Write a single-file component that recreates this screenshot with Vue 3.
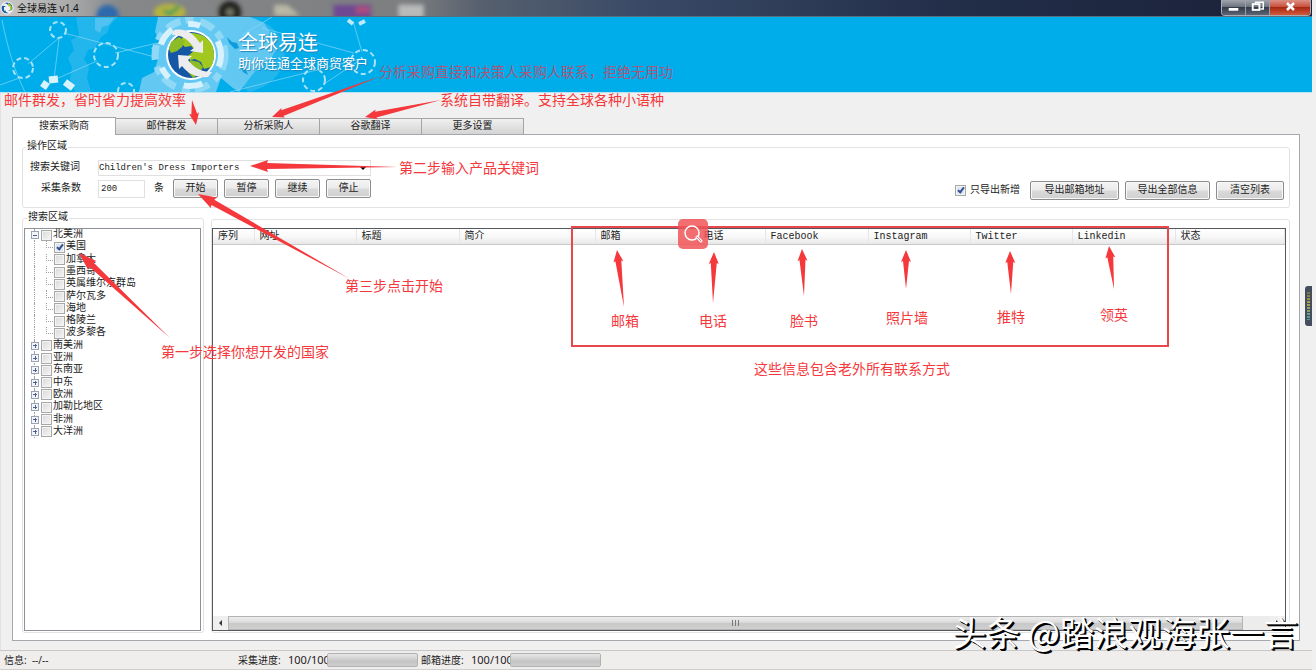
<template>
  <div class="app-window">
    <header class="title-bar">
      <svg class="desktop-blur" width="520" height="17" viewBox="0 0 520 17" aria-hidden="true">
        <defs>
          <filter id="soft" x="-20%" y="-50%" width="140%" height="200%"><feGaussianBlur stdDeviation="2" /></filter>
        </defs>
        <g filter="url(#soft)">
          <circle cx="98" cy="17" r="12" fill="#2f69ab" />
          <ellipse cx="164" cy="13" rx="17" ry="9" fill="#b5b43c" />
          <path d="M158 11l6 4 10-8" stroke="#3f9a5a" stroke-width="4" fill="none" />
          <circle cx="228" cy="13" r="12" fill="#22241f" />
          <circle cx="228" cy="13" r="4" fill="#77786a" />
          <path d="M275 17V5h14l14 12z" fill="#b9b8a4" />
          <rect x="338" y="5" width="40" height="16" fill="#704a92" />
          <rect x="362" y="7" width="14" height="7" fill="#b04d7c" />
          <rect x="407" y="5" width="27" height="14" fill="#b9bbbb" />
        </g>
      </svg>
      <svg class="title-icon" viewBox="0 0 14 14" aria-hidden="true">
        <circle cx="7" cy="7" r="6" fill="#1c5fa8" stroke="#fff" />
        <path d="M8 2c3 1 5 4 3 8L8 7z" fill="#a5c92c" />
        <path d="M2 3c3-2 6 0 7 3l1-1v4H6l1-1C6 5 4 4 2 5zM12 11c-3 2-6 1-7-2L4 10V6h4L7 7c1 3 3 3 5 2z" fill="#f2f2f2" />
      </svg>
      <span class="title-text">全球易连 v1.4</span>
      <div class="window-buttons">
        <button type="button" aria-label="最小化"><svg viewBox="0 0 24 15"><path d="M7 8h10v3H7z" fill="#fff" /></svg></button>
        <button type="button" aria-label="还原"><svg viewBox="0 0 24 15"><path d="M10 5V2h8v7h-3" stroke="#fff" stroke-width="1.5" fill="none" /><rect x="7" y="4" width="7" height="6" stroke="#fff" stroke-width="2" fill="none" /></svg></button>
        <button type="button" class="close" aria-label="关闭"><svg viewBox="0 0 40 15"><path d="M17 3l7 7M24 3l-7 7" stroke="#fff" stroke-width="2.5" /></svg></button>
      </div>
    </header>

    <div class="banner">
      <svg class="banner-art" width="400" height="75" viewBox="0 0 400 75" aria-hidden="true">
        <g fill="#63c8f2">
          <path d="M76 0h42l-8 8-3 8-6 4-6 11-7 2-4 9 5 8-2 11 4 14H75l-5-13 2-12-4-9 6-8-3-10 8-4z" opacity=".35" />
          <path d="M95 1h19l-5 7-7 2-2 6-5-3z" opacity=".7" />
          <path d="M158 0h92l14 6 6 9-4 9 10 9-6 10-9 5-9 10-6 8-7 9-6-4-12-10-5 14h-77l3-14 12-6 4-13-7-11 9-7-5-9z" />
          <path d="M250 0c22 5 38 22 34 44-4 16-18 27-35 31l-29-25z" opacity=".35" />
        </g>
        <path d="M227 20l5 5 5 1 2 5-4 1-6-6zM238 44l7 6 3 8-5-3z" fill="#0f9cdc" />
        <g stroke="#86d6f5" fill="none" stroke-width="1" opacity=".7">
          <path d="M2 3C8 33 15 55 25 75M60 20L28 47M64 16l91 24M59 22l-5 40M115 36l42-10M22 60L0 68M97 44L56 62M242 18L272 0M262 11l92 25M362 35l-9-31M357 45l-33 22M230 75L360 42" />
        </g>
        <g fill="none" stroke="#a9e3fa" stroke-dasharray="5 3" stroke-width="2">
          <circle cx="58" cy="13" r="8" />
          <circle cx="106" cy="38" r="12" />
          <circle cx="23" cy="51" r="10" />
          <circle cx="126" cy="74" r="8" />
          <circle cx="314" cy="63" r="11" />
          <circle cx="363" cy="45" r="12" />
        </g>
        <g fill="none" stroke="#bdeafb">
          <path d="M348 3l5 4M359 7l6-3" stroke-width="4" />
          <path d="M43 71l4-6M49 63l9-1M65 65l8 6" stroke-width="7" stroke="#d8f3fd" />
        </g>
        <circle cx="190" cy="38" r="35" fill="none" stroke="#90d9f6" stroke-width="7" stroke-dasharray="15 5 8 7" />
        <circle cx="190" cy="38" r="31" fill="none" stroke="#d7f2fd" stroke-width="6" stroke-dasharray="12 24 19 17" />
        <circle cx="191" cy="38" r="25" fill="#fff" />
        <circle cx="191" cy="38" r="23" fill="#1557a5" />
        <path d="M183 17c11-3 22 0 28 9 4 7 4 16 0 24l-7 2-3-7-6-3-5 1-2-4 7-6-4-4-6 1-5-5 3-5z" fill="#a0c81f" />
        <path d="M190 43l9 2 4 5-4 7-6 4-5-6z" fill="#8dbd26" />
        <path d="M171 25l8-5 6 4-3 6-5 4-6 2-2-4z" fill="#8dbd26" />
        <path d="M172 18l2-5c12-2 19 3 26 13l3-3v13l-13-2 4-3c-6-9-12-13-22-13z" fill="#ececee" />
        <path d="M212 55l-4 5c-11 1-20-3-26-11l-3 3-1-14 14 1-4 4c6 8 13 12 24 12z" fill="#ececee" />
      </svg>
      <div class="brand">
        <h1>全球易连</h1>
        <p>助你连通全球商贸客户</p>
      </div>
    </div>

    <main class="workspace">
      <nav class="tabs">
        <button
          v-for="tab in tabs"
          :key="tab"
          type="button"
          :class="{ active: tab === activeTab }"
          @click="activeTab = tab"
        >{{ tab }}</button>
      </nav>

      <div class="panel">
        <fieldset class="group operation">
          <legend>操作区域</legend>
          <div class="operation-body">
            <div class="search-form">
              <div class="form-row">
                <label for="keyword">搜索关键词</label>
                <select id="keyword" v-model="keyword">
                  <option>Children's Dress Importers</option>
                </select>
              </div>
              <div class="form-row second">
                <label for="count">采集条数</label>
                <input id="count" v-model="count" type="text">
                <span class="unit">条</span>
                <div class="run-buttons">
                  <button v-for="name in runButtons" :key="name" type="button" class="btn">{{ name }}</button>
                </div>
              </div>
            </div>
            <div class="export-bar">
              <label class="only-new"><input v-model="onlyNew" type="checkbox" class="check">只导出新增</label>
              <button type="button" class="btn wide">导出邮箱地址</button>
              <button type="button" class="btn medium">导出全部信息</button>
              <button type="button" class="btn small">清空列表</button>
            </div>
          </div>
        </fieldset>

        <div class="columns">
          <fieldset class="group region">
            <legend>搜索区域</legend>
            <div class="tree">
              <ul>
                <li v-for="item in regions" :key="item.name" :class="{ child: item.child }">
                  <button
                    v-if="!item.child"
                    type="button"
                    class="expander"
                    :class="{ open: item.open }"
                    :aria-label="item.name"
                  ></button>
                  <label><input v-model="item.checked" type="checkbox" class="check">{{ item.name }}</label>
                </li>
              </ul>
            </div>
          </fieldset>

          <div class="group result">
            <div class="grid-box">
              <table>
                <colgroup>
                  <col v-for="col in columns" :key="col.name" :class="col.size">
                </colgroup>
                <thead>
                  <tr>
                    <th v-for="col in columns" :key="col.name" scope="col">{{ col.name }}</th>
                  </tr>
                </thead>
              </table>
              <div class="scrollbar">
                <button type="button" class="arrow-btn" aria-label="向左"><svg viewBox="0 0 14 14"><path d="M9 4v6L6 7z" fill="#333" /></svg></button>
                <div class="thumb"><i></i><i></i><i></i></div>
                <button type="button" class="arrow-btn" aria-label="向右"><svg viewBox="0 0 14 14"><path d="M6 4v6l3-3z" fill="#333" /></svg></button>
              </div>
            </div>
          </div>
        </div>
      </div>
    </main>

    <footer class="status-bar">
      <span class="info">信息:&nbsp; --/--</span>
      <label class="caption" for="collect">采集进度:</label>
      <span class="value">100/100</span>
      <progress id="collect" value="0" max="100"></progress>
      <label class="caption" for="mail">邮箱进度:</label>
      <span class="value">100/100</span>
      <progress id="mail" value="0" max="100"></progress>
    </footer>

    <!-- 教程标注 -->
    <svg class="notes" width="1316" height="670" viewBox="0 0 1316 670">
      <rect x="572" y="227" width="596" height="119" fill="none" stroke="#e8474c" stroke-width="2" />
      <polygon v-for="(a, i) in arrows" :key="i" :points="arrowPoints(a)" />
      <text v-for="n in notes" :key="n.text" :x="n.x" :y="n.y" :class="{ dim: n.dim }">{{ n.text }}</text>
    </svg>
    <button type="button" class="lens" aria-label="搜图">
      <svg viewBox="0 0 30 30"><circle cx="14" cy="14" r="7" fill="none" stroke="#fff" stroke-width="1.5" /><path d="M19 18l4 4" stroke="#fff" stroke-width="3" stroke-linecap="round" /><path d="M19 18l4 4" stroke="#ee6b6e" stroke-linecap="round" /></svg>
    </button>
    <div class="side-widget"><i></i></div>
    <div class="watermark">头条 @踏浪观海张一言</div>
  </div>
</template>

<script setup>
import { ref } from 'vue'

const tabs = ['搜索采购商', '邮件群发', '分析采购人', '谷歌翻译', '更多设置']
const activeTab = ref('搜索采购商')

const keyword = ref("Children's Dress Importers")
const count = ref('200')
const onlyNew = ref(true)
const runButtons = ['开始', '暂停', '继续', '停止']

const regions = ref([
  { name: '北美洲', open: true, checked: false },
  { name: '美国', child: true, checked: true },
  { name: '加拿大', child: true, checked: false },
  { name: '墨西哥', child: true, checked: false },
  { name: '英属维尔京群岛', child: true, checked: false },
  { name: '萨尔瓦多', child: true, checked: false },
  { name: '海地', child: true, checked: false },
  { name: '格陵兰', child: true, checked: false },
  { name: '波多黎各', child: true, checked: false },
  { name: '南美洲', checked: false },
  { name: '亚洲', checked: false },
  { name: '东南亚', checked: false },
  { name: '中东', checked: false },
  { name: '欧洲', checked: false },
  { name: '加勒比地区', checked: false },
  { name: '非洲', checked: false },
  { name: '大洋洲', checked: false }
])

const columns = [
  { name: '序列', size: 'c-index' },
  { name: '网址', size: 'c-short' },
  { name: '标题', size: 'c-normal' },
  { name: '简介', size: 'c-intro' },
  { name: '邮箱', size: 'c-normal' },
  { name: '电话', size: 'c-phone' },
  { name: 'Facebook', size: 'c-normal' },
  { name: 'Instagram', size: 'c-short' },
  { name: 'Twitter', size: 'c-short' },
  { name: 'Linkedin', size: 'c-normal' },
  { name: '状态', size: 'c-rest' }
]

// 箭头: [尖端x, 尖端y, 尾部x, 尾部y]
const arrows = [
  [196, 125, 192, 100],
  [272, 117, 381, 76],
  [365, 117, 441, 100],
  [250, 166, 398, 167],
  [198, 194, 350, 279],
  [79, 253, 170, 338],
  [617, 250, 624, 307],
  [714, 252, 713, 303],
  [802, 249, 804, 296],
  [906, 250, 906, 289],
  [1010, 251, 1011, 294],
  [1109, 246, 1114, 289]
]

const notes = [
  { text: '邮件群发，省时省力提高效率', x: 4, y: 105 },
  { text: '分析采购直接和决策人采购人联系，拒绝无用功', x: 379, y: 77, dim: true },
  { text: '系统自带翻译。支持全球各种小语种', x: 440, y: 105 },
  { text: '第二步输入产品关键词', x: 399, y: 173 },
  { text: '第三步点击开始', x: 345, y: 291 },
  { text: '第一步选择你想开发的国家', x: 161, y: 357 },
  { text: '邮箱', x: 611, y: 326 },
  { text: '电话', x: 699, y: 326 },
  { text: '脸书', x: 790, y: 326 },
  { text: '照片墙', x: 886, y: 323 },
  { text: '推特', x: 997, y: 322 },
  { text: '领英', x: 1100, y: 320 },
  { text: '这些信息包含老外所有联系方式', x: 754, y: 374 }
]

const arrowPoints = ([x, y, tx, ty]) => {
  const len = Math.hypot(tx - x, ty - y)
  const ux = (tx - x) / len
  const uy = (ty - y) / len
  const big = len > 120
  const head = big ? 18 : 12
  const wing = big ? 6 : 5
  const at = (d, w) => `${x + ux * d - uy * w},${y + uy * d + ux * w}`
  return [at(0, 0), at(head, wing), at(head - 1, 3), at(len, 0), at(head - 1, -3), at(head, -wing)].join(' ')
}
</script>

<style>
body {
  background: #f0f0f0;
}
</style>

<style scoped>
.app-window {
  position: relative;
  display: flex;
  flex-direction: column;
  box-sizing: border-box;
  min-height: 100vh;
  padding-right: 4px;
  overflow: hidden;
  background: #f0f0f0;
  color: #222;
  font-family: "Liberation Mono", "Noto Sans CJK SC", monospace;
  font-size: 10px;
  line-height: 12px;
}

button,
input,
select {
  box-sizing: border-box;
  margin: 0;
  padding: 0;
  font: inherit;
  color: inherit;
}

/* 标题栏 */
.title-bar {
  position: relative;
  display: flex;
  align-items: center;
  height: 17px;
  box-sizing: border-box;
  border-bottom: 1px solid #54707f;
  background: linear-gradient(90deg, #c9c9c9 0, #aaa 70px, #858789 120px, #7c7e80 410px, #56606e 480px, #3a4a66 640px, #222d48 960px, #1a2238 100%);
}

.desktop-blur {
  position: absolute;
  left: 0;
  top: 0;
  height: 16px;
}

.title-icon {
  position: relative;
  width: 14px;
  height: 14px;
}

.title-text {
  position: relative;
  margin-left: 3px;
  color: #111;
  font-family: "Noto Sans", "Noto Sans CJK SC", sans-serif;
}

.window-buttons {
  display: flex;
  align-self: flex-start;
  height: 15px;
  margin-left: auto;
  margin-right: 1px;
  border: 1px solid #a9aeb6;
  border-top: none;
  border-radius: 0 0 4px 4px;
  overflow: hidden;
}

.window-buttons button {
  width: 24px;
  border: none;
  border-right: 1px solid #9aa0aa;
  background: linear-gradient(#a0a5ad 0, #6e7480 45%, #343b49 50%, #5c6675 100%);
}

.window-buttons .close {
  width: 40px;
  border-right: none;
  background: linear-gradient(#dc9186 0, #c8503e 45%, #a92812 50%, #d05a3c 100%);
}

.window-buttons svg {
  display: block;
  width: 100%;
  height: 15px;
}

/* 横幅 */
.banner {
  position: relative;
  height: 76px;
  background: #00adeb;
  border-bottom: 1px solid #b9e2f3;
  box-sizing: border-box;
}

.banner-art {
  position: absolute;
  left: 0;
  top: 0;
  height: 75px;
}

.brand {
  position: relative;
  padding: 13px 0 0 238px;
  color: #fff;
  font-family: "Noto Sans CJK SC", sans-serif;
  text-shadow: 1px 1px 1px #2183b5;
}

.brand h1 {
  margin: 0;
  font-size: 20px;
  line-height: 24px;
  font-weight: 400;
}

.brand p {
  margin: 0;
  font-size: 13px;
  line-height: 18px;
}

/* 主体 */
.workspace {
  display: flex;
  flex: 1;
  flex-direction: column;
  padding: 24px 12px 9px 11px;
  border-left: 1px solid #e2e2e2;
}

.tabs {
  display: flex;
  align-items: flex-end;
}

.tabs button {
  width: 102px;
  height: 16px;
  border: 1px solid #a5a5a5;
  border-left: none;
  border-bottom: none;
  background: linear-gradient(#f0f0f0, #d4d4d4);
}

.tabs button.active {
  position: relative;
  width: 104px;
  height: 18px;
  margin-bottom: -1px;
  border-left: 1px solid #a5a5a5;
  background: #fff;
}

.panel {
  display: flex;
  flex: 1;
  flex-direction: column;
  padding: 6px 9px 7px;
  border: 1px solid #a5a9ad;
  background: #fff;
}

.group {
  min-width: 0;
  margin: 0;
  border: 1px solid #e2e2e2;
  border-radius: 3px;
  box-sizing: border-box;
}

legend {
  margin-left: 3px;
  padding: 0 1px;
}

/* fieldset 内边距会作用到 legend，缩进放在内容上 */
.operation {
  padding: 7px 5px 9px 0;
}

.operation-body {
  display: flex;
  justify-content: space-between;
  align-items: flex-end;
  padding-left: 7px;
}

.search-form {
  display: flex;
  flex-direction: column;
  gap: 3px;
}

.form-row {
  display: flex;
  align-items: center;
}

.form-row label {
  width: 68px;
}

.form-row.second label {
  box-sizing: border-box;
  padding-left: 11px;
}

select,
.form-row input {
  border: 1px solid #e0e0e0;
  background: #fff;
  font-size: 9px;
}

select {
  width: 273px;
  height: 16px;
  appearance: none;
  background: url("data:image/svg+xml,%3Csvg xmlns='http://www.w3.org/2000/svg' width='8' height='4'%3E%3Cpath d='M0 0h8L4 4z'/%3E%3C/svg%3E") no-repeat right 3px center #fff;
}

.form-row input {
  width: 47px;
  height: 18px;
  padding: 0 2px;
}

.unit {
  width: 10px;
  margin: 0 9px;
}

.run-buttons {
  display: flex;
  gap: 6px;
}

.btn {
  width: 45px;
  height: 19px;
  border: 1px solid #8d8d8d;
  border-radius: 2px;
  background: linear-gradient(#f4f4f4 0, #ebebeb 48%, #dadada 52%, #cfcfcf 100%);
  box-shadow: inset 0 0 0 1px #f8f8f8;
}

.btn.wide {
  width: 89px;
}

.btn.medium {
  width: 85px;
}

.btn.small {
  width: 68px;
}

.export-bar {
  display: flex;
  align-items: center;
  gap: 6px;
  margin-bottom: -2px;
}

.only-new {
  display: flex;
  align-items: center;
  gap: 4px;
  margin-right: 4px;
}

.check {
  position: relative;
  flex: none;
  width: 11px;
  height: 11px;
  appearance: none;
  border: 1px solid #a8a8a8;
  background: linear-gradient(135deg, #d9d9d9, #f6f6f6);
  box-shadow: inset 0 0 0 1px #f4f4f4;
}

.check:checked {
  background: #dde7f4;
}

.check:checked::before {
  content: "";
  position: absolute;
  left: 3px;
  top: 0;
  width: 2px;
  height: 5px;
  border: solid #33508f;
  border-width: 0 2px 2px 0;
  transform: rotate(38deg);
}

.columns {
  display: flex;
  flex: 1;
  gap: 7px;
  padding-top: 4px;
}

/* 国家树 */
.region {
  display: flex;
  width: 182px;
  padding: 4px 2px 1px 1px;
}

.tree {
  flex: 1;
  box-sizing: border-box;
  height: 100%;
  border: 1px solid #8e9298;
}

.tree ul {
  display: grid;
  grid-auto-rows: 1fr;
  height: 209px;
  margin: 0;
  padding: 0 0 0 6px;
  list-style: none;
}

.tree li {
  position: relative;
  display: flex;
  align-items: center;
  gap: 2px;
}

.tree li::before {
  content: "";
  position: absolute;
  left: 3px;
  top: 0;
  bottom: 0;
  border-left: 1px dotted #a0a0a0;
}

.tree li.child {
  padding-left: 23px;
}

.tree li.child::after {
  content: "";
  position: absolute;
  left: 15px;
  top: 0;
  width: 6px;
  height: 50%;
  border: dotted #a0a0a0;
  border-width: 0 0 1px 1px;
}

.tree label {
  display: flex;
  align-items: center;
  gap: 1px;
  white-space: nowrap;
}

.expander {
  position: relative;
  width: 8px;
  height: 8px;
  border: 1px solid #9aa3b4;
  background: linear-gradient(#4a5f96, #4a5f96) center / 4px 1px no-repeat, linear-gradient(#4a5f96, #4a5f96) center / 1px 4px no-repeat, #f3f5fa;
}

.expander.open {
  background: linear-gradient(#4a5f96, #4a5f96) center / 4px 1px no-repeat, #f3f5fa;
}

/* 结果列表 */
.result {
  display: flex;
  flex: 1;
  margin-top: 7px;
  padding: 8px 3px 1px 0;
}

.grid-box {
  display: flex;
  flex: 1;
  flex-direction: column;
  justify-content: space-between;
  min-width: 0;
  border: 1px solid #55585c;
}

table {
  width: 100%;
  table-layout: fixed;
  border-collapse: collapse;
}

th {
  height: 14px;
  padding: 1px 0 0 5px;
  border-right: 1px solid #e6e6e6;
  border-bottom: 1px solid #c9c9c9;
  background: linear-gradient(#fff 0, #f8f8f8 50%, #e8e8e8 100%);
  font-size: 10px;
  font-weight: 400;
  text-align: left;
}

.c-index {
  width: 41px;
}

.c-short {
  width: 102px;
}

.c-normal {
  width: 103px;
}

.c-intro {
  width: 136px;
}

.c-phone {
  width: 67px;
}

.scrollbar {
  display: flex;
  height: 14px;
  background: #ececec;
}

.arrow-btn {
  width: 15px;
  border: none;
  background: #efefef;
}

.arrow-btn svg {
  display: block;
  width: 14px;
  height: 14px;
}

.thumb {
  display: flex;
  flex: 1;
  align-items: center;
  justify-content: center;
  gap: 2px;
  margin-right: 27px;
  border: 1px solid #b4b4b4;
  background: linear-gradient(#ededed 0, #dcdcdc 45%, #c8c8c8 50%, #cfcfcf 100%);
}

.thumb i {
  width: 1px;
  height: 6px;
  background: #777;
}

/* 状态栏 */
.status-bar {
  display: flex;
  align-items: center;
  box-sizing: border-box;
  height: 20px;
  padding-left: 4px;
  border-top: 1px solid #c8c8c8;
  border-bottom: 1px solid #cfcfcf;
  background: #f0eeed;
  font-family: "Noto Sans", "Noto Sans CJK SC", sans-serif;
  white-space: nowrap;
}

.info {
  width: 234px;
}

.caption {
  width: 50px;
}

.value {
  width: 39px;
  overflow: hidden;
  font-size: 11px;
}

progress {
  width: 91px;
  height: 14px;
  margin-right: 3px;
  box-sizing: border-box;
  appearance: none;
  border: 1px solid #b2b2b2;
  border-radius: 2px;
  background: linear-gradient(#e6e6e6 0, #d2d2d2 40%, #c4c4c4 60%, #cecece 100%);
}

progress::-webkit-progress-bar {
  background: transparent;
}

/* 标注层 */
.notes {
  position: absolute;
  left: 0;
  top: 0;
  pointer-events: none;
  fill: #f5383c;
  font-family: "Noto Sans CJK SC", sans-serif;
  font-size: 14px;
}

.notes .dim {
  fill: #a8587c;
}

.lens {
  position: absolute;
  left: 678px;
  top: 219px;
  width: 30px;
  height: 30px;
  border: none;
  border-radius: 5px;
  background: rgba(240, 85, 88, 0.85);
}

.lens svg {
  display: block;
}

.side-widget {
  position: absolute;
  right: 4px;
  top: 286px;
  display: flex;
  justify-content: center;
  align-items: center;
  width: 7px;
  height: 40px;
  border-radius: 3px 0 0 3px;
  background: #454e5e;
}

.side-widget i {
  width: 3px;
  height: 28px;
  background: repeating-linear-gradient(transparent 0 2px, #454e5e 2px 3px), linear-gradient(#7c7440, #b5a24a 40%, #4f9a96);
}

.watermark {
  position: absolute;
  right: 18px;
  bottom: 18px;
  color: #fff;
  font-family: "Noto Sans CJK SC", sans-serif;
  font-size: 34px;
  line-height: 40px;
  text-shadow: 1px 1px 0 #000, 2px 2px 0 #000;
  white-space: nowrap;
}
</style>
